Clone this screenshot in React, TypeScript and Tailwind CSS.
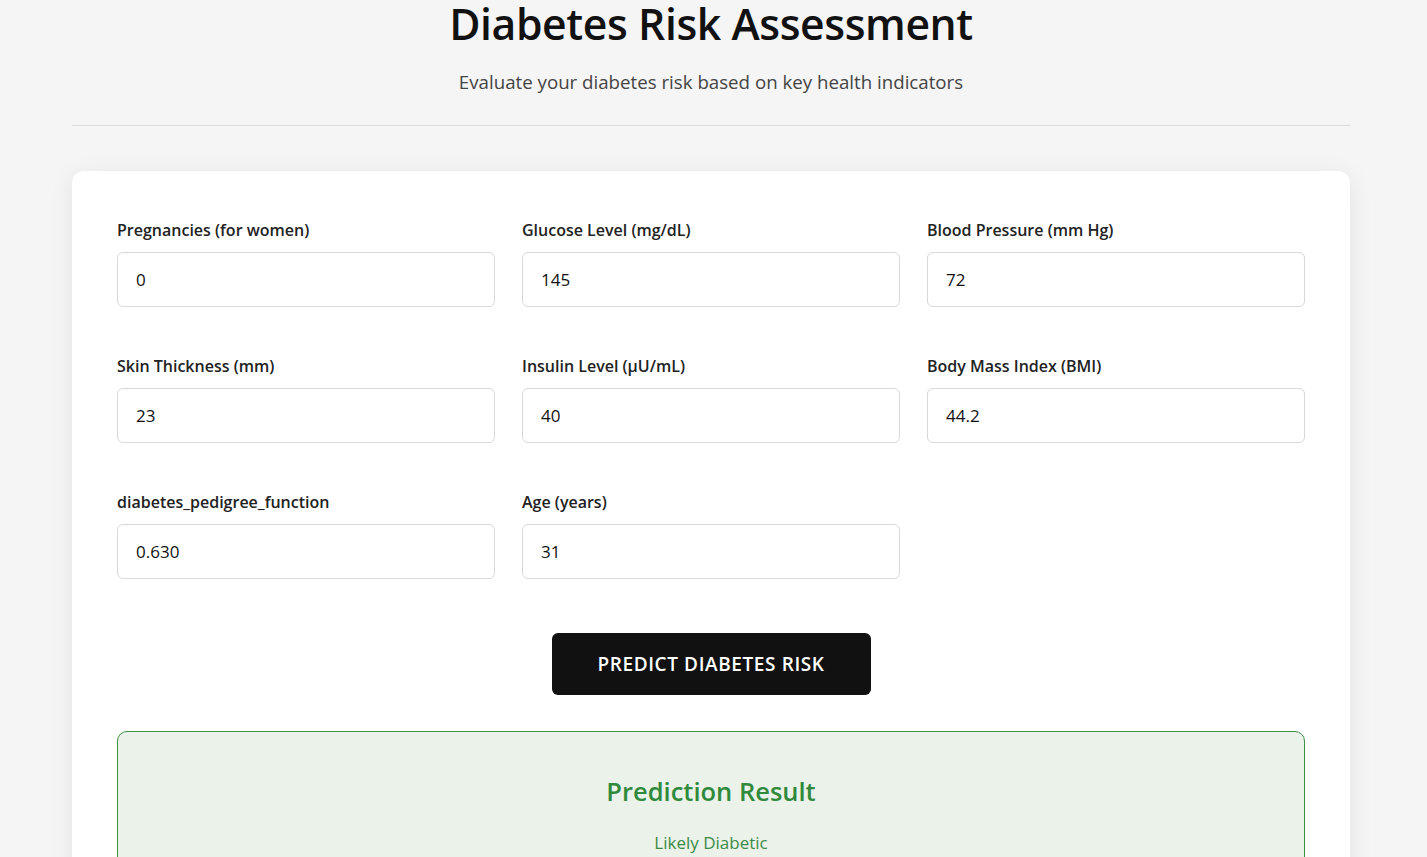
import React from "react";

const fields = [
  { label: "Pregnancies (for women)", value: "0" },
  { label: "Glucose Level (mg/dL)", value: "145" },
  { label: "Blood Pressure (mm Hg)", value: "72" },
  { label: "Skin Thickness (mm)", value: "23" },
  { label: "Insulin Level (µU/mL)", value: "40" },
  { label: "Body Mass Index (BMI)", value: "44.2" },
  { label: "diabetes_pedigree_function", value: "0.630" },
  { label: "Age (years)", value: "31" },
];

export default function App() {
  return (
    <div
      className="min-h-[857px] w-full bg-[#f5f5f5] text-[#111]"
      style={{ fontFamily: '"Open Sans", "Noto Sans", sans-serif' }}
    >
      <div className="ml-[72px] flex w-[1278px] flex-col">
        <h1 className="text-center text-[42.7px] font-semibold leading-[48px] tracking-[-0.4px]">
          Diabetes Risk Assessment
        </h1>
        <p className="mt-[22px] text-center text-[18.7px] leading-[24px] text-[#444]">
          Evaluate your diabetes risk based on key health indicators
        </p>
        <div className="mt-[31px] h-px bg-[#dcdcdc]" />
        <div className="mt-[45px] rounded-[12px] bg-white px-[45px] pt-[47px] pb-[60px] shadow-[0_4px_24px_rgba(0,0,0,0.08)]">
          <div className="grid grid-cols-3 gap-x-[27px] gap-y-[47px]">
            {fields.map((f) => (
              <div key={f.label} className="flex flex-col">
                <label className="text-[16px] font-semibold leading-[24px] text-[#222]">
                  {f.label}
                </label>
                <div className="mt-[10px] flex h-[55px] items-center rounded-[6px] border border-[#d9d9d9] px-[18px] text-[17px] text-[#111]">
                  {f.value}
                </div>
              </div>
            ))}
          </div>
          <div className="mt-[54px] flex justify-center">
            <button className="h-[62px] w-[319px] rounded-[6px] bg-[#111111] text-[19px] font-semibold tracking-[0.6px] text-white">
              PREDICT DIABETES RISK
            </button>
          </div>
          <div className="mt-[36px] rounded-[10px] border border-[#3f8f45] bg-[#eaf2ea] pt-[41px] pb-[40px] text-center">
            <h2 className="text-[25.5px] font-semibold leading-[36px] text-[#2f8a3c]">
              Prediction Result
            </h2>
            <p className="mt-[22px] text-[17px] leading-[24px] text-[#3b8b45]">
              Likely Diabetic
            </p>
          </div>
        </div>
      </div>
    </div>
  );
}
